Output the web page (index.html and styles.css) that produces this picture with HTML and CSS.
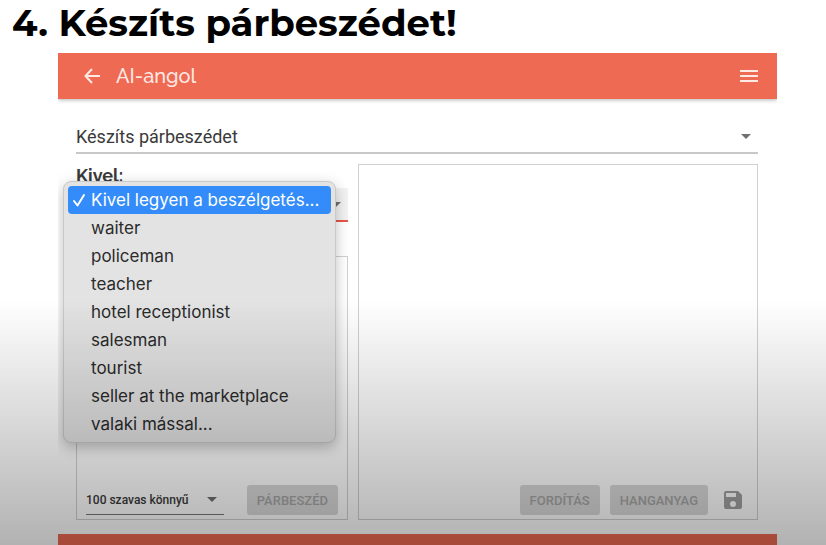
FILE: index.html
```html
<!DOCTYPE html>
<html lang="hu">
<head>
<meta charset="utf-8">
<meta name="viewport" content="width=device-width, initial-scale=1">
<title>AI-angol</title>
<link rel="stylesheet" href="styles.css">
</head>
<body>
<h1 class="slide-title">4. Készíts párbeszédet!</h1>
<div class="app">
  <header class="app-bar">
    <a class="back" href="#" aria-label="Vissza"><svg viewBox="0 0 16 16" width="16" height="16"><path d="M8 1 1.5 8 8 15M1.5 8H16" fill="none" stroke="currentColor" stroke-width="2"/></svg></a>
    <span class="app-name">AI-angol</span>
    <button class="menu-button" type="button" aria-label="Menü"><svg viewBox="0 0 18 14" width="18" height="14"><path d="M0 2h18M0 7h18M0 12h18" stroke="currentColor" stroke-width="2"/></svg></button>
  </header>
  <main class="content">
    <div class="select-wrap mode">
      <select aria-label="Feladat"><option>Készíts párbeszédet</option></select>
      <svg class="caret" viewBox="0 0 10 5" width="10" height="5"><path d="M0 0h10L5 5z" fill="currentColor"/></svg>
    </div>
    <div class="columns">
      <section class="left">
        <label class="partner-label" for="partner">Kivel:</label>
        <div class="select-wrap partner">
          <select id="partner"><option></option></select>
          <svg class="caret" viewBox="0 0 10 5" width="10" height="5"><path d="M0 0h10L5 5z" fill="currentColor"/></svg>
        </div>
        <div class="panel">
          <div class="select-wrap length">
            <select aria-label="Hossz"><option>100 szavas könnyű</option></select>
            <svg class="caret" viewBox="0 0 10 5" width="10" height="5"><path d="M0 0h10L5 5z" fill="currentColor"/></svg>
          </div>
          <button class="action" type="button" disabled>PÁRBESZÉD</button>
        </div>
        <ul class="options" role="listbox" aria-label="Kivel">
          <li class="selected" role="option" aria-selected="true"><svg class="check" viewBox="0 0 14 14" width="14" height="14"><path d="M2 8l3.500 4.500L12 2" fill="none" stroke="currentColor" stroke-width="2" stroke-linecap="round" stroke-linejoin="round"/></svg>Kivel legyen a beszélgetés...</li>
          <li role="option">waiter</li>
          <li role="option">policeman</li>
          <li role="option">teacher</li>
          <li role="option">hotel receptionist</li>
          <li role="option">salesman</li>
          <li role="option">tourist</li>
          <li role="option">seller at the marketplace</li>
          <li role="option">valaki mással...</li>
        </ul>
      </section>
      <section class="panel result">
        <button class="action" type="button" disabled>FORDÍTÁS</button>
        <button class="action" type="button" disabled>HANGANYAG</button>
        <button class="save" type="button" disabled aria-label="Mentés"><svg viewBox="3 3 18 18" width="18" height="18"><path d="M17 3H5a2 2 0 0 0-2 2v14a2 2 0 0 0 2 2h14a2 2 0 0 0 2-2V7l-4-4zm-5 16a3 3 0 1 1 0-6 3 3 0 0 1 0 6zm3-10H5V5h10v4z" fill="currentColor"/></svg></button>
      </section>
    </div>
  </main>
  <footer class="app-footer"></footer>
</div>
<div class="shade"></div>
</body>
</html>
```
FILE: styles.css
```css
* { box-sizing: border-box; }
body {
  margin: 0;
  min-height: 100vh;
  display: flex;
  flex-direction: column;
  background: #fff;
  color: #3a3a3a;
  font-family: Roboto, sans-serif;
}
.slide-title {
  margin: 0;
  padding: 0 12px 7px;
  font: 700 37px/46px Montserrat, Inter, sans-serif;
  color: #000;
}
.app {
  flex: 1;
  display: flex;
  flex-direction: column;
  margin: 0 49px 0 58px;
  overflow: hidden;
}
.app-bar {
  display: flex;
  align-items: center;
  gap: 16px;
  height: 46px;
  padding: 0 19px 0 26px;
  background: #ee6a53;
  color: #ffe9e4;
  box-shadow: 0 1px 4px rgba(0, 0, 0, .3);
}
.back { display: flex; color: inherit; }
.app-name { flex: 1; font: 500 20px/24px Raleway, Lato, sans-serif; }
button { border: 0; padding: 0; font-family: inherit; }
.menu-button { display: flex; background: none; color: inherit; }
.content {
  flex: 1;
  display: flex;
  flex-direction: column;
  padding: 21px 19px 14px 18px;
}
.select-wrap { display: flex; align-items: center; position: relative; }
.select-wrap select {
  flex: 1;
  min-width: 0;
  height: 100%;
  padding: 0;
  border: 0;
  appearance: none;
  background: none;
  color: inherit;
  font: inherit;
}
.caret { position: absolute; right: 7px; color: #707070; }
.mode { height: 34px; border-bottom: 2px solid #c8c8c8; font-size: 18px; }
.columns {
  flex: 1;
  display: grid;
  grid-template-columns: 272fr 400fr;
  gap: 10px;
  margin-top: 10px;
}
.left { position: relative; display: flex; flex-direction: column; }
.partner-label { font: 700 18px/24px Raleway, Lato, sans-serif; }
.partner { height: 34px; margin-bottom: 34px; background: #f2f2f2; border-bottom: 2px solid #e5574a; }
.panel {
  flex: 1;
  display: flex;
  align-items: flex-end;
  justify-content: space-between;
  padding: 4px 9px;
  border: 1px solid #d0d0d0;
}
.length {
  width: 138px;
  height: 30px;
  border-bottom: 1px solid #777;
  font-size: 12px;
  font-weight: 500;
}
.result { justify-content: flex-end; gap: 10px; }
.action {
  height: 30px;
  padding: 0 10px;
  border-radius: 3px;
  background: #d9d9d9;
  color: #a6a6a6;
  font-size: 13px;
  font-weight: 500;
}
.save { display: flex; align-items: center; height: 30px; padding: 0 6px; background: none; color: #a0a0a0; }
.options {
  position: absolute;
  top: 17px;
  left: -13px;
  width: 273px;
  margin: 0;
  padding: 4px;
  border: 1px solid #c9c9c9;
  border-radius: 8px;
  background: #e3e3e3;
  box-shadow: 0 4px 14px rgba(0, 0, 0, .25);
  list-style: none;
  color: #2b2b2b;
  font: 400 17px/28px Inter, sans-serif;
}
.options li { position: relative; padding-left: 23px; border-radius: 4px; white-space: nowrap; }
.options .selected { background: #338cfa; color: #fff; }
.check { position: absolute; left: 4px; top: 7px; }
.app-footer { height: 11px; background: #ee6a53; }
.shade {
  position: fixed;
  inset: 0;
  pointer-events: none;
  background: linear-gradient(transparent 55%, rgba(0, 0, 0, .3));
}
```
